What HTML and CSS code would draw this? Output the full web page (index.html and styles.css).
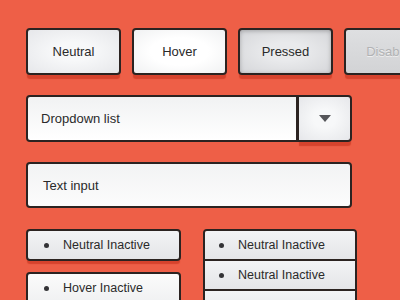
FILE: index.html
```html
<!DOCTYPE html>
<html lang="en">
<head>
  <meta charset="UTF-8">
  <title>UI Kit</title>
  <link rel="stylesheet" href="styles.css">
</head>
<body>

<div class="kit">
  <div class="btn-row">
    <button class="btn">Neutral</button>
    <button class="btn hover">Hover</button>
    <button class="btn pressed">Pressed</button>
    <button class="btn disabled">Disabled</button>
  </div>

  <div class="dropdown">
    <div class="dropdown-label">Dropdown list</div>
    <div class="dropdown-arrow"><span class="triangle"></span></div>
  </div>

  <div class="text-input">Text input</div>

  <div class="lists">
    <div class="list-col">
      <div class="item single"><span class="dot"></span>Neutral Inactive</div>
      <div class="item single hover"><span class="dot"></span>Hover Inactive</div>
    </div>
    <div class="list-col stacked">
      <div class="item"><span class="dot"></span>Neutral Inactive</div>
      <div class="item"><span class="dot"></span>Neutral Inactive</div>
      <div class="item"><span class="dot"></span>Neutral Inactive</div>
    </div>
  </div>
</div>

</body>
</html>
```

FILE: styles.css
```css
body {
  margin: 0;
  padding: 0;
  background-color: #ee5f47;
  font-family: "Liberation Sans", Arial, sans-serif;
  overflow: hidden;
}
.kit {
  width: 520px;
  padding: 28px 0 0 26px;
}
.btn-row {
  display: flex;
  gap: 11px;
}
.btn {
  box-sizing: border-box;
  width: 95px;
  height: 47px;
  border: 2px solid #2b2321;
  border-radius: 4px;
  background: radial-gradient(ellipse at center, #f7f8f9 30%, #e6e7ea 100%);
  box-shadow: 0 5px 1px -1px #d6432d;
  font-family: inherit;
  font-size: 13px;
  color: #2a2a2a;
  padding: 0;
}
.btn.hover {
  background: radial-gradient(ellipse at center, #ffffff 45%, #f0f1f2 100%);
}
.btn.pressed {
  background: radial-gradient(ellipse at center, #e9eaec 30%, #d5d6d9 100%);
  box-shadow: inset 0 1px 4px rgba(0, 0, 0, 0.25), 0 5px 1px -1px #d6432d;
}
.btn.disabled {
  background: linear-gradient(#dedfe1, #d2d3d5);
  color: #b1b2b4;
  text-shadow: 0 1px 0 #eeeeee;
}
.dropdown {
  display: flex;
  width: 326px;
  height: 47px;
  margin-top: 20px;
}
.dropdown-label {
  flex: 1;
  display: flex;
  align-items: center;
  padding-left: 13px;
  border: 2px solid #2b2321;
  border-radius: 4px 0 0 4px;
  background: linear-gradient(#f1f2f3, #ffffff);
  font-size: 13px;
  color: #2a2a2a;
}
.dropdown-arrow {
  box-sizing: border-box;
  width: 54px;
  display: flex;
  align-items: center;
  justify-content: center;
  border: 2px solid #2b2321;
  border-left-width: 1px;
  border-radius: 0 4px 4px 0;
  background: radial-gradient(ellipse at center, #f7f8f9 30%, #e6e7ea 100%);
  box-shadow: 0 5px 1px -1px #d6432d;
}
.triangle {
  width: 0;
  height: 0;
  border-left: 6px solid transparent;
  border-right: 6px solid transparent;
  border-top: 7px solid #55565a;
}
.text-input {
  box-sizing: border-box;
  width: 326px;
  height: 46px;
  margin-top: 20px;
  display: flex;
  align-items: center;
  padding-left: 15px;
  border: 2px solid #2b2321;
  border-radius: 4px;
  background: linear-gradient(#f2f3f4, #fcfcfc);
  font-size: 13px;
  color: #2a2a2a;
}
.lists {
  display: flex;
  gap: 22px;
  margin-top: 21px;
  align-items: flex-start;
}
.list-col {
  display: flex;
  flex-direction: column;
  gap: 11px;
  width: 155px;
}
.list-col.stacked {
  box-sizing: border-box;
  gap: 0;
  width: 154px;
  border: 2px solid #2b2321;
  border-radius: 4px;
  overflow: hidden;
}
.item {
  box-sizing: border-box;
  height: 30px;
  display: flex;
  align-items: center;
  padding-left: 16px;
  background: linear-gradient(#f2f3f5, #e4e5e8);
  border-bottom: 2px solid #2b2321;
  font-size: 12.5px;
  color: #2a2a2a;
}
.list-col.stacked .item {
  padding-left: 14px;
}
.item.single {
  height: 32px;
  border: 2px solid #2b2321;
  border-radius: 4px;
  box-shadow: 0 4px 1px -1px #d6432d;
}
.item.hover {
  background: linear-gradient(#fbfbfb, #f0f1f2);
}
.dot {
  width: 5px;
  height: 5px;
  border-radius: 50%;
  background-color: #333336;
  margin-right: 14px;
}
```
